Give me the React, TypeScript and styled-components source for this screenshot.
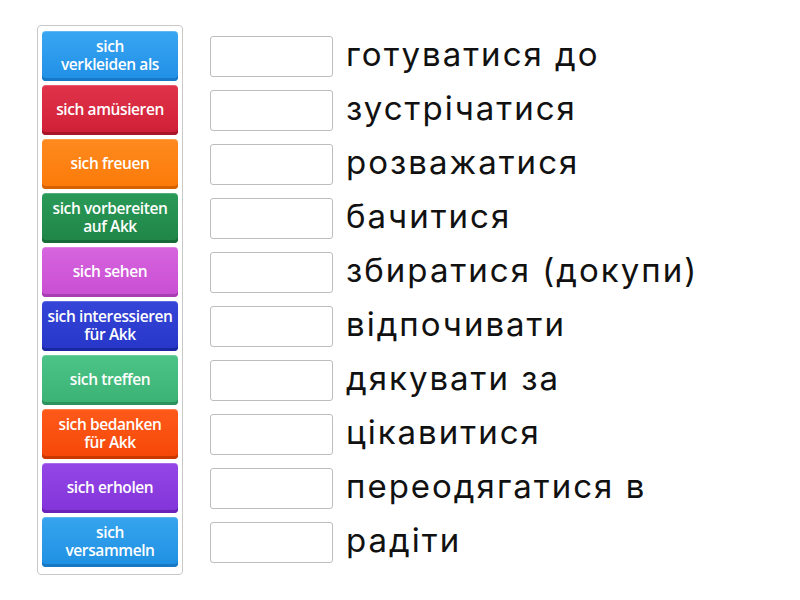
import React from "react";
import styled, { createGlobalStyle } from "styled-components";

const Global = createGlobalStyle`
  html, body { margin: 0; padding: 0; background: #ffffff; }
  body { font-family: "Open Sans", sans-serif; }
`;

const Page = styled.div`
  display: flex;
  align-items: flex-start;
  padding: 25px 0 0 37px;
`;

const Card = styled.div`
  display: flex;
  flex-direction: column;
  gap: 4px;
  width: 136px;
  padding: 5px 4px 7px 4px;
  border: 1px solid #c8c8c8;
  border-radius: 4px;
  background: #fff;
`;

const Tile = styled.div<{ $top: string; $bottom: string; $edge: string }>`
  height: 50px;
  display: flex;
  flex-direction: column;
  align-items: center;
  justify-content: center;
  text-align: center;
  box-sizing: border-box;
  padding: 0 0 3px;
  border-radius: 4px;
  background: linear-gradient(${(p) => p.$top}, ${(p) => p.$bottom});
  box-shadow: inset 0 -3px 0 ${(p) => p.$edge}, inset 0 1px 0 rgba(255,255,255,0.2);
  color: #ffffff;
  font-family: "Open Sans", sans-serif;
  font-size: 15.5px;
  font-weight: 600;
  letter-spacing: -0.4px;
  white-space: nowrap;
`;

const TileLine = styled.span`
  display: block;
  line-height: 18px;
  height: 18px;
`;

const Answers = styled.div`
  display: flex;
  flex-direction: column;
  gap: 4px;
  margin-left: 27px;
  padding-top: 6px;
`;

const Row = styled.div`
  height: 50px;
  display: flex;
  align-items: center;
  gap: 13px;
`;

const Slot = styled.div`
  width: 121px;
  height: 39px;
  border: 1px solid #bdbdbd;
  border-radius: 3px;
  background: #fff;
  flex: none;
`;

const Label = styled.span`
  font-family: "Inter", sans-serif;
  font-size: 33px;
  letter-spacing: 2px;
  color: #111;
  white-space: nowrap;
  margin-top: -4px;
`;

const tiles = [
  { t: "sich\nverkleiden als", a: "#3aa6f2", b: "#1f8fe6", e: "#1778c8" },
  { t: "sich amüsieren", a: "#e0334a", b: "#cf1f37", e: "#a8162a" },
  { t: "sich freuen", a: "#ff8a1f", b: "#fb7a08", e: "#d46200" },
  { t: "sich vorbereiten\nauf Akk", a: "#2a9a58", b: "#1f8547", e: "#166a38" },
  { t: "sich sehen", a: "#d665de", b: "#c94dd2", e: "#a83cb2" },
  { t: "sich interessieren\nfür Akk", a: "#3545d8", b: "#2636c8", e: "#1a27a0" },
  { t: "sich treffen", a: "#4cc487", b: "#3bb274", e: "#2c915c" },
  { t: "sich bedanken\nfür Akk", a: "#ff5a1a", b: "#f44708", e: "#c83800" },
  { t: "sich erholen", a: "#9446e6", b: "#8334d9", e: "#6a22b8" },
  { t: "sich\nversammeln", a: "#36a4ee", b: "#1f90e2", e: "#1778c4" },
];

const words = [
  "готуватися до",
  "зустрічатися",
  "розважатися",
  "бачитися",
  "збиратися (докупи)",
  "відпочивати",
  "дякувати за",
  "цікавитися",
  "переодягатися в",
  "радіти",
];

export default function App() {
  return (
    <>
      <Global />
      <Page>
        <Card>
          {tiles.map((x, i) => (
            <Tile key={i} $top={x.a} $bottom={x.b} $edge={x.e}>
              {x.t.split("\n").map((l, j) => (
                <TileLine key={j}>{l}</TileLine>
              ))}
            </Tile>
          ))}
        </Card>
        <Answers>
          {words.map((w, i) => (
            <Row key={i}>
              <Slot />
              <Label>{w}</Label>
            </Row>
          ))}
        </Answers>
      </Page>
    </>
  );
}
